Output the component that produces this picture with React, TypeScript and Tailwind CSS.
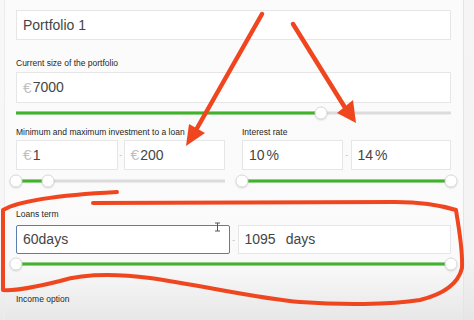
import React from "react";

const font = { fontFamily: '"Liberation Sans", Arial, Helvetica, sans-serif' };

function Thumb({ pos }: { pos: number }) {
  return (
    <div
      className="absolute top-1/2 w-[13px] h-[13px] -translate-x-1/2 -translate-y-1/2 rounded-full bg-white border border-[#dadada] shadow-[0_1px_2px_rgba(0,0,0,0.12)]"
      style={{ left: `${pos}%` }}
    />
  );
}

function Slider({ a, b, green }: { a: number; b?: number; green: [number, number] }) {
  return (
    <div className="relative h-[12px] w-full">
      <div className="absolute left-0 right-0 top-1/2 h-[3px] -translate-y-1/2 bg-[#dcdcdc]" />
      <div
        className="absolute top-1/2 h-[3px] -translate-y-1/2 bg-[#3fb32a]"
        style={{ left: `${green[0]}%`, width: `${green[1] - green[0]}%` }}
      />
      <Thumb pos={a} />
      {b !== undefined && <Thumb pos={b} />}
    </div>
  );
}

function Label({ children }: { children: React.ReactNode }) {
  return <div className="text-[8.5px] leading-[10px] h-[10px] text-[#1f1f1f] whitespace-nowrap">{children}</div>;
}

function Box({ children, focus, h = "h-[30px]" }: { children: React.ReactNode; focus?: boolean; h?: string }) {
  return (
    <div
      className={
        "flex-1 min-w-0 flex items-center pl-[6px] bg-white text-[14px] text-[#454545] " +
        h +
        " " +
        (focus ? "border-[1.5px] border-[#5b7cad] rounded-[2px]" : "border border-[#e6e6e6]")
      }
    >
      {children}
    </div>
  );
}

function Sep() {
  return <div className="w-[6px] flex justify-center text-[8px] text-[#aaa]">-</div>;
}

const Euro = () => <span className="text-[#c0c0c0] text-[15.5px] leading-none mr-[1px]">€</span>;

export default function App() {
  return (
    <div className="relative w-[474px] h-[320px] overflow-hidden flex" style={font}>
      <div className="w-[5px] h-full bg-[linear-gradient(to_bottom,#f8f8f8_0%,#f6f6f6_80%,#e9e9e9_100%)] border-r border-[#ececec]" />
      <div className="flex-1 h-full bg-[linear-gradient(to_bottom,#fbfbfb_0%,#fafafa_82%,#e7e7e7_100%)] pl-[11px] pr-[12px] pt-[10px] flex flex-col">
        <div className="flex">
          <Box>Portfolio 1</Box>
        </div>
        <div className="mt-[18px]">
          <Label>Current size of the portfolio</Label>
        </div>
        <div className="mt-[4px] flex">
          <Box h="h-[31px]">
            <Euro />
            7000
          </Box>
        </div>
        <div className="mt-[4px]">
          <Slider a={70} green={[0, 70]} />
        </div>
        <div className="mt-[8px] grid grid-cols-2 gap-x-[17px]">
          <div>
            <Label>Minimum and maximum investment to a loan</Label>
            <div className="mt-[3px] flex items-center">
              <Box>
                <Euro />1
              </Box>
              <Sep />
              <Box>
                <Euro />200
              </Box>
            </div>
            <div className="mt-[5px]">
              <Slider a={0} b={15.3} green={[0, 15.3]} />
            </div>
          </div>
          <div>
            <Label>Interest rate</Label>
            <div className="mt-[3px] flex items-center gap-[1px]">
              <Box>
                10<span className="ml-[2px]">%</span>
              </Box>
              <Sep />
              <Box>
                14<span className="ml-[2px]">%</span>
              </Box>
            </div>
            <div className="mt-[5px]">
              <Slider a={0} b={100} green={[0, 100]} />
            </div>
          </div>
        </div>
        <div className="mt-[22px]">
          <Label>Loans term</Label>
        </div>
        <div className="mt-[6px] flex items-center gap-[1px]">
          <Box focus h="h-[29px]">60days</Box>
          <Sep />
          <Box h="h-[29px]">
            1095<span className="ml-[10px]">days</span>
          </Box>
        </div>
        <div className="mt-[4px]">
          <Slider a={0} b={100} green={[0, 100]} />
        </div>
        <div className="mt-[24px]">
          <Label>Income option</Label>
        </div>
      </div>
      <div className="w-[11px] h-full bg-[linear-gradient(to_bottom,#f5f5f5_0%,#f3f3f3_80%,#e6e6e6_100%)] border-l border-[#e4e4e4]" />

      <svg className="absolute inset-0 pointer-events-none" width="474" height="320" viewBox="0 0 474 320">
        <g stroke="#555" strokeWidth="1" fill="none">
          <path d="M215 223 L220 223 M217.5 223 L217.5 231 M215 231 L220 231" />
        </g>
        <g stroke="#f0461f" strokeWidth="4.5" strokeLinecap="round" fill="none">
          <path d="M262 14 L196 130" />
          <path d="M293 24 L344 106" />
        </g>
        <g fill="#f0461f">
          <polygon points="186,146 189,124 205,133" />
          <polygon points="356,123 337,113 353,100" />
        </g>
        <path
          d="M93 203 L395 202 C420 202 440 205 456 210 C459 230 463 250 462 268 C458 285 440 295 420 300 C390 305 340 305 300 302 C260 299 200 285 150 278 C110 273 80 275 60 281 C40 286 15 291 3 290 L3 210 C20 200 60 195 117 192"
          stroke="#f0461f"
          strokeWidth="4"
          strokeLinecap="round"
          strokeLinejoin="round"
          fill="none"
        />
      </svg>
    </div>
  );
}
